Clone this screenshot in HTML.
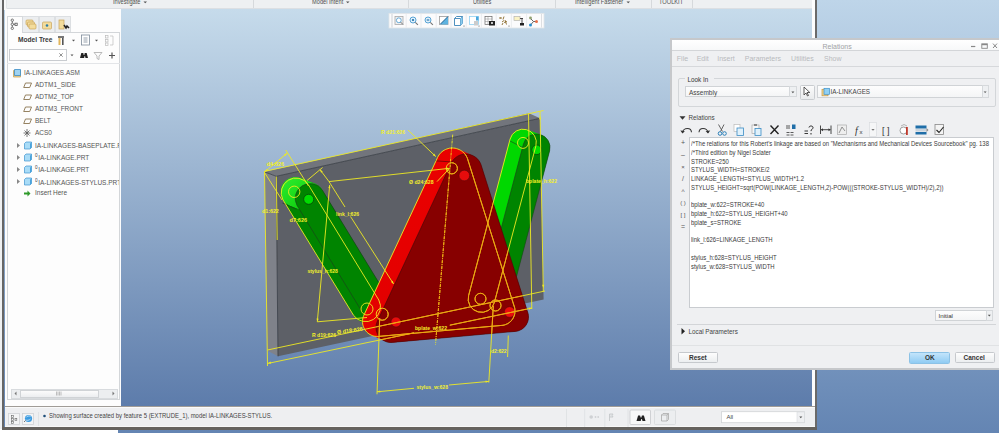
<!DOCTYPE html>
<html><head><meta charset="utf-8">
<style>
*{margin:0;padding:0;box-sizing:border-box}
html,body{width:999px;height:433px;overflow:hidden}
body{position:relative;font-family:"Liberation Sans",sans-serif;background:linear-gradient(#bed5e9 0px,#6485b3 433px);}
.a{position:absolute}
.t{position:absolute;white-space:nowrap;color:#333;line-height:1}
</style></head><body>
<!-- back window strip left -->
<div class="a" style="left:0;top:0;width:2.5px;height:433px;background:#eef0f2"></div>
<div class="a" style="left:0;top:429px;width:118px;height:4px;background:#fff"></div>
<!-- creo window -->
<div class="a" style="left:2.3px;top:0;width:2px;height:429px;background:#666"></div>
<div class="a" style="left:815px;top:0;width:2px;height:429px;background:#6a6a6a"></div>
<div class="a" style="left:2.3px;top:427px;width:814.7px;height:2.5px;background:#65625e"></div>
<div class="a" style="left:812px;top:0;width:3px;height:408px;background:#fdfdfd"></div>
<!-- ribbon -->
<div class="a" style="left:4.3px;top:0;width:808px;height:9.5px;background:#f8f9fa"></div>
<div class="a" style="left:6.3px;top:0;width:806px;height:9px;background:#eef0f2;border-bottom:1.5px solid #dcdfe3;border-left:1px solid #e2e5e8;border-bottom-left-radius:1.5px"></div>
<div class="a" style="left:253px;top:0;width:1px;height:8px;background:#d6d9dc"></div>
<div class="a" style="left:408px;top:0;width:1px;height:8px;background:#d6d9dc"></div>
<div class="a" style="left:555px;top:0;width:1px;height:8px;background:#d6d9dc"></div>
<div class="a" style="left:651px;top:0;width:1px;height:8px;background:#d6d9dc"></div>
<div class="a" style="left:692px;top:0;width:1px;height:8px;background:#d6d9dc"></div>
<div class="t" style="left:112.5px;top:-0.85px;font-size:6.6px;color:#505050;transform:scaleX(0.86);transform-origin:0 0">Investigate</div>
<div class="t" style="left:312px;top:-0.85px;font-size:6.6px;color:#505050;transform:scaleX(0.86);transform-origin:0 0">Model Intent</div>
<div class="t" style="left:473px;top:-0.85px;font-size:6.6px;color:#505050;transform:scaleX(0.86);transform-origin:0 0">Utilities</div>
<div class="t" style="left:575px;top:-0.85px;font-size:6.6px;color:#505050;transform:scaleX(0.86);transform-origin:0 0">Intelligent Fastener</div>
<div class="t" style="left:659px;top:-0.85px;font-size:6.6px;color:#505050;transform:scaleX(0.86);transform-origin:0 0">TOOLKIT</div>
<svg class="a" style="left:0;top:0" width="700" height="8">
 <path d="M143.5 1.5h3.5l-1.75 1.8z M346 1.5h3.5l-1.75 1.8z M626.5 1.5h3.5l-1.75 1.8z" fill="#555"/>
</svg>
<!-- left panel -->
<div class="a" style="left:5px;top:9px;width:116px;height:397px;background:#fdfdfd"></div>
<!-- tabs -->
<div class="a" style="left:22px;top:16px;width:17px;height:16px;background:#eceef0;border:1px solid #dcdfe2;border-bottom:none"></div>
<div class="a" style="left:39px;top:16px;width:16px;height:16px;background:#eceef0;border:1px solid #dcdfe2;border-bottom:none"></div>
<div class="a" style="left:55px;top:16px;width:16px;height:16px;background:#eceef0;border:1px solid #dcdfe2;border-bottom:none"></div>
<div class="a" style="left:7px;top:16px;width:16px;height:17px;background:#fdfdfd;border:1px solid #d6d9dc;border-bottom:none"></div>
<!-- panel box -->
<div class="a" style="left:7px;top:32px;width:113px;height:368px;border:1px solid #d3d6d9;border-top:none"></div>
<div class="a" style="left:22px;top:32px;width:98px;height:1px;background:#d3d6d9"></div>
<div class="a" style="left:7px;top:63px;width:113px;height:1px;background:#e3e5e8"></div>
<!-- tab icons -->
<svg class="a" style="left:0;top:0" width="125" height="70">
 <g fill="none" stroke="#555" stroke-width="0.8">
  <circle cx="12.3" cy="20.2" r="1.2"/><circle cx="12.3" cy="24.3" r="1.2"/><circle cx="12.3" cy="28.3" r="1.2"/><rect x="15" y="23.2" width="2.2" height="2.2"/>
  <path d="M12.3 21.4v1.7M12.3 25.5v1.6M13.5 24.3h1.5"/>
 </g>
 <g fill="#f3dc9c" stroke="#c8a35a" stroke-width="0.7">
  <rect x="26" y="20" width="7" height="5" rx="1"/><rect x="27.5" y="22" width="7" height="5" rx="1"/><rect x="29" y="24" width="7" height="5" rx="1"/>
  <rect x="42.5" y="22" width="9" height="7" rx="1"/>
  <rect x="59" y="20" width="5" height="9"/>
 </g>
 <circle cx="47" cy="25.5" r="1.3" fill="#2d7ea8"/>
 <path d="M64 25l2 3 1-2 2 2" stroke="#222" stroke-width="1.6" fill="none"/>
 <!-- header icons -->
 <rect x="58" y="36" width="6" height="2" fill="#777"/>
 <rect x="58.5" y="38" width="2" height="7" fill="#e2b65c"/>
 <rect x="62" y="38" width="1.6" height="7" fill="#555"/>
 <path d="M72 39.8h3l-1.5 1.8z" fill="#555"/>
 <rect x="81.5" y="35" width="8" height="10" fill="#fff" stroke="#7d8a99" stroke-width="0.8"/>
 <path d="M83.5 38h4M83.5 40h4M83.5 42h4" stroke="#6a7a8a" stroke-width="0.7"/>
 <path d="M95 39.8h3l-1.5 1.8z" fill="#555"/>
 <g fill="none" stroke="#bbb" stroke-width="0.7"><rect x="105.5" y="35.5" width="2.5" height="2.5"/><rect x="105.5" y="39.5" width="2.5" height="2.5"/><rect x="105.5" y="43" width="2.5" height="2.5"/><path d="M110 36h3v9h-3"/></g>
 <!-- search -->
 <rect x="9.5" y="49.5" width="57" height="11" fill="#fff" stroke="#c9ccd0" stroke-width="1"/>
 <path d="M59.3 53.3l3.4 3.4M62.7 53.3l-3.4 3.4" stroke="#777" stroke-width="0.8"/>
 <path d="M70.5 54.5h3l-1.5 1.8z" fill="#555"/>
 <path d="M80 58l1.3-5h2l.4 2h.6l.4-2h2l1.3 5h-2.5l-.5-2h-.4l-.5 2z" fill="#222"/>
 <path d="M94 52.5h8l-3 3.5v3.5l-2-1v-2.5z" fill="none" stroke="#aaa" stroke-width="0.8"/>
 <path d="M112 52.5v6M109 55.5h6" stroke="#555" stroke-width="1.2"/>
</svg>
<div class="t" style="left:18px;top:37.2px;font-size:6.6px;font-weight:bold;color:#3a3a3a">Model Tree</div>
<!-- tree items -->
<svg class="a" style="left:0;top:60px" width="125" height="145">
 <path d="M13.5 10.5h7v6.5h-7z" fill="#f1d592" stroke="#caa55a" stroke-width="0.8"/>
 <path d="M14.5 9.5h6v6h-6z" fill="#9fd3f2" stroke="#3a8cc5" stroke-width="0.8"/>
 <g fill="none" stroke="#8a7550" stroke-width="0.9">
  <path d="M25.5 23h6l-1.8 4.5h-6z"/><path d="M25.5 35h6l-1.8 4.5h-6z"/><path d="M25.5 47h6l-1.8 4.5h-6z"/><path d="M25.5 59h6l-1.8 4.5h-6z"/>
 </g>
 <g stroke="#555" stroke-width="0.8"><path d="M27 69v8M23.5 73h7M24.5 70.5l5 5M29.5 70.5l-5 5"/></g>
 <g fill="#888"><path d="M17 83l3 2.5-3 2.5z"/><path d="M17 95l3 2.5-3 2.5z"/><path d="M17 107l3 2.5-3 2.5z"/><path d="M17 119l3 2.5-3 2.5z"/></g>
 <path d="M24.5 83.5l1.5-1.5h5.5v5.5l-1.5 1.5h-5.5z" fill="#a9dcf7" stroke="#3d94cf" stroke-width="0.7"/><path d="M30 83.5l1.5-1.5v5.5l-1.5 1.5z" fill="#4aa3dc"/><path d="M24.5 95.5l1.5-1.5h5.5v5.5l-1.5 1.5h-5.5z" fill="#a9dcf7" stroke="#3d94cf" stroke-width="0.7"/><path d="M30 95.5l1.5-1.5v5.5l-1.5 1.5z" fill="#4aa3dc"/><path d="M24.5 107.5l1.5-1.5h5.5v5.5l-1.5 1.5h-5.5z" fill="#a9dcf7" stroke="#3d94cf" stroke-width="0.7"/><path d="M30 107.5l1.5-1.5v5.5l-1.5 1.5z" fill="#4aa3dc"/><path d="M24.5 119.5l1.5-1.5h5.5v5.5l-1.5 1.5h-5.5z" fill="#a9dcf7" stroke="#3d94cf" stroke-width="0.7"/><path d="M30 119.5l1.5-1.5v5.5l-1.5 1.5z" fill="#4aa3dc"/>
 <path d="M24 132.5h3.5v-2l3 3-3 3v-2h-3.5z" fill="#2e9a2a"/>
</svg>
<div class="t" style="left:24px;top:70px;font-size:6.4px;color:#555">IA-LINKAGES.ASM</div>
<div class="t" style="left:35px;top:81.5px;font-size:6.5px;color:#555">ADTM1_SIDE</div>
<div class="t" style="left:35px;top:93.5px;font-size:6.5px;color:#555">ADTM2_TOP</div>
<div class="t" style="left:35px;top:105.5px;font-size:6.5px;color:#555">ADTM3_FRONT</div>
<div class="t" style="left:35px;top:117.5px;font-size:6.5px;color:#555">BELT</div>
<div class="t" style="left:35px;top:129.5px;font-size:6.5px;color:#555">ACS0</div>
<div class="a" style="left:35px;top:141px;width:84px;height:10px;overflow:hidden"><div class="t" style="left:0;top:1.5px;font-size:6.5px;color:#555">IA-LINKAGES-BASEPLATE.PRT</div></div>
<div class="t" style="left:35px;top:153.5px;font-size:6.5px;color:#555"><span style="font-size:4.6px;vertical-align:2.5px;margin-right:0.6px;color:#444">0</span>IA-LINKAGE.PRT</div>
<div class="t" style="left:35px;top:165.5px;font-size:6.5px;color:#555"><span style="font-size:4.6px;vertical-align:2.5px;margin-right:0.6px;color:#444">0</span>IA-LINKAGE.PRT</div>
<div class="a" style="left:35px;top:177px;width:84px;height:10px;overflow:hidden"><div class="t" style="left:0;top:1.5px;font-size:6.5px;color:#555"><span style="font-size:4.6px;vertical-align:2.5px;margin-right:0.6px;color:#444">0</span>IA-LINKAGES-STYLUS.PRT</div></div>
<div class="t" style="left:35px;top:189.5px;font-size:6.5px;color:#555">Insert Here</div>
<!-- scrollbar -->
<div class="a" style="left:11px;top:389px;width:107px;height:10px;background:#eceef0;border:1px solid #d8dbde"></div>
<div class="a" style="left:20px;top:390px;width:79px;height:8px;background:linear-gradient(#fbfbfb,#eceef0);border:1px solid #d0d3d6"></div>
<svg class="a" style="left:0;top:385px" width="125" height="20">
 <path d="M16.5 6.5l-2 2 2 2z" fill="#777"/><path d="M112.5 6.5l2 2-2 2z" fill="#777"/>
 <path d="M56.5 6.5v4M58 6.5v4M59.5 6.5v4M61 6.5v4" stroke="#999" stroke-width="0.6"/>
</svg>
<!-- viewport -->
<div id="vp" class="a" style="left:121px;top:9px;width:691px;height:397px;background:linear-gradient(#c6dbeb 0px,#5d7cab 397px)"></div>
<!-- MODEL -->
<svg class="a" style="left:0;top:0" width="999" height="433"><defs>
<linearGradient id="gcap" x1="0" y1="0" x2="1" y2="1"><stop offset="0" stop-color="#30ee30"/><stop offset="1" stop-color="#00c000"/></linearGradient>
<linearGradient id="gred" x1="0" y1="0" x2="0" y2="1"><stop offset="0" stop-color="#ea0000"/><stop offset="1" stop-color="#e20000"/></linearGradient>
</defs><path d="M264.5 171.8L529 113.3L540 118.3L276.2 176.3Z" fill="#72757c"/>
<path d="M264.5 171.8L276.2 176.3L278 356.3L267.2 350.6Z" fill="#7f828a"/>
<path d="M276.2 176.3L540 118.3L543.6 299.4L278 356.3Z" fill="#5d6067"/>
<path d="M264.5 171.8L276.2 176.3L540 118.3M276.2 176.3L278 356.3" stroke="#34363b" stroke-width="0.7" fill="none"/>
<path d="M280.7 192.0L280.8 190.1L281.2 188.2L281.8 186.3L282.7 184.6L283.8 183.0L285.0 181.5L286.5 180.3L288.1 179.2L289.8 178.3L291.7 177.7L293.6 177.3L295.5 177.2L297.4 177.3L299.3 177.7L301.2 178.3L315.2 183.8L316.9 184.7L318.5 185.8L320.0 187.0L321.2 188.5L322.3 190.1L393.0 305.8L393.9 307.5L394.5 309.4L394.9 311.3L395.0 313.2L394.9 315.1L394.5 317.0L393.9 318.9L393.0 320.6L391.9 322.2L390.7 323.7L389.2 324.9L387.6 326.0L385.9 326.9L384.0 327.5L382.1 327.9L380.2 328.0L378.3 327.9L376.4 327.5L374.5 326.9L360.5 321.4L358.8 320.5L357.2 319.4L355.7 318.2L354.5 316.7L353.4 315.1L282.7 199.4L281.8 197.7L281.2 195.8L280.8 193.9Z" fill="#008400"/>
<clipPath id="cl1"><path d="M207.9 173.7L356.9 232.3L386.1 157.8L237.2 99.3Z"/></clipPath>
<path clip-path="url(#cl1)" d="M280.7 192.0L280.8 190.1L281.2 188.2L281.8 186.3L282.7 184.6L283.8 183.0L285.0 181.5L286.5 180.3L288.1 179.2L289.8 178.3L291.7 177.7L293.6 177.3L295.5 177.2L297.4 177.3L299.3 177.7L301.2 178.3L315.2 183.8L316.9 184.7L318.5 185.8L320.0 187.0L321.2 188.5L322.3 190.1L323.2 191.8L323.8 193.7L324.2 195.6L324.3 197.5L324.2 199.4L323.8 201.3L323.2 203.2L322.3 204.9L321.2 206.5L320.0 208.0L318.5 209.2L316.9 210.3L315.2 211.2L313.3 211.8L311.4 212.2L309.5 212.3L307.6 212.2L305.7 211.8L303.8 211.2L289.8 205.7L288.1 204.8L286.5 203.7L285.0 202.5L283.8 201.0L282.7 199.4L281.8 197.7L281.2 195.8L280.8 193.9Z" fill="url(#gcap)"/>
<path d="M282.4 203L296.5 209.2" stroke="#1d3a1d" stroke-width="0.6"/>
<path d="M296.9 205.2L367.6 320.9A14.8 14.8 0 0 0 392.8 305.5L322.1 189.8A14.8 14.8 0 0 0 296.9 205.2Z" fill="#008400" stroke="#1d3a1d" stroke-width="0.6"/>
<circle cx="308.7" cy="199.3" r="5" fill="#00dc00" stroke="#0a3a0a" stroke-width="0.7"/>
<path d="M468.0 300.0L468.1 298.2L468.5 296.5L510.0 139.0L510.5 137.3L511.3 135.8L512.3 134.3L513.5 133.0L514.8 131.8L516.2 130.8L517.8 130.0L519.5 129.5L521.2 129.1L523.0 129.0L524.8 129.1L526.5 129.5L528.2 130.0L541.7 135.0L543.2 135.8L544.7 136.8L546.0 138.0L547.2 139.3L548.2 140.8L549.0 142.3L549.5 144.0L549.9 145.7L550.0 147.5L549.9 149.3L549.5 151.0L508.0 308.5L507.5 310.2L506.7 311.8L505.7 313.2L504.5 314.5L503.2 315.7L501.8 316.7L500.2 317.5L498.5 318.0L496.8 318.4L495.0 318.5L493.2 318.4L491.5 318.0L489.8 317.5L476.3 312.5L474.8 311.7L473.3 310.7L472.0 309.5L470.8 308.2L469.8 306.8L469.0 305.2L468.5 303.5L468.1 301.8Z" fill="#00d800"/>
<path d="M523.4 144.1L481.9 301.6A13.5 13.5 0 0 0 508.1 308.4L549.6 150.9A13.5 13.5 0 0 0 523.4 144.1Z" fill="#008400" stroke="#1d3a1d" stroke-width="0.6"/>
<path d="M509.7 140.8L523 147.7" stroke="#1d3a1d" stroke-width="0.6"/>
<circle cx="536.7" cy="149.8" r="4.8" fill="#00dc00" stroke="#0a3a0a" stroke-width="0.7"/>
<path d="M362.5 321.5L362.6 320.2L362.7 318.9L363.0 317.6L363.4 316.4L363.9 315.2L437.6 157.4L438.3 156.1L439.0 154.9L439.9 153.8L440.8 152.7L441.9 151.8L443.0 150.9L444.2 150.2L445.5 149.5L446.8 149.0L448.1 148.6L449.5 148.2L450.9 148.1L452.3 148.0L453.7 148.1L455.1 148.2L456.5 148.6L457.8 149.0L459.1 149.5L472.6 155.5L473.9 156.2L475.1 156.9L476.2 157.8L477.3 158.7L478.2 159.8L479.1 160.9L479.8 162.1L480.5 163.4L481.0 164.7L527.6 312.0L528.0 313.2L528.3 314.5L528.4 315.7L528.5 317.0L528.4 318.3L528.3 319.5L528.0 320.8L527.6 322.0L527.1 323.1L526.6 324.2L525.9 325.3L525.1 326.3L524.3 327.3L523.3 328.1L522.3 328.9L521.2 329.6L520.1 330.1L519.0 330.6L517.8 331.0L516.5 331.3L515.3 331.4L392.3 342.4L391.0 342.5L389.7 342.4L388.4 342.3L387.1 342.0L385.9 341.6L384.7 341.1L371.2 335.1L370.0 334.5L368.9 333.8L367.9 333.0L366.9 332.1L366.0 331.1L365.2 330.1L364.5 329.0L363.9 327.8L363.4 326.6L363.0 325.4L362.7 324.1L362.6 322.8Z" fill="url(#gred)"/>
<path d="M376.0 327.5L376.1 326.2L376.2 324.9L376.5 323.6L376.9 322.4L377.4 321.2L451.1 163.4L451.8 162.1L452.5 160.9L453.4 159.8L454.3 158.7L455.4 157.8L456.5 156.9L457.7 156.2L459.0 155.5L460.3 155.0L461.6 154.6L463.0 154.2L464.4 154.1L465.8 154.0L467.2 154.1L468.6 154.2L470.0 154.6L471.3 155.0L472.6 155.5L473.9 156.2L475.1 156.9L476.2 157.8L477.3 158.7L478.2 159.8L479.1 160.9L479.8 162.1L480.5 163.4L481.0 164.7L527.6 312.0L528.0 313.2L528.3 314.5L528.4 315.7L528.5 317.0L528.4 318.3L528.3 319.5L528.0 320.8L527.6 322.0L527.1 323.1L526.6 324.2L525.9 325.3L525.1 326.3L524.3 327.3L523.3 328.1L522.3 328.9L521.2 329.6L520.1 330.1L519.0 330.6L517.8 331.0L516.5 331.3L515.3 331.4L392.3 342.4L391.0 342.5L389.7 342.4L388.4 342.3L387.1 342.0L385.9 341.6L384.7 341.1L383.5 340.5L382.4 339.8L381.4 339.0L380.4 338.1L379.5 337.1L378.7 336.1L378.0 335.0L377.4 333.8L376.9 332.6L376.5 331.4L376.2 330.1L376.1 328.8Z" fill="#870000" stroke="#3a0808" stroke-width="0.6"/>
<path d="M435 160.8L452.5 162" stroke="#3a0808" stroke-width="0.6"/>
<circle cx="464.3" cy="175.5" r="5.3" fill="#e80c0c" stroke="#4a0a0a" stroke-width="0.5"/>
<circle cx="396" cy="322" r="5" fill="#e80c0c" stroke="#4a0a0a" stroke-width="0.5"/>
<circle cx="509.6" cy="312" r="5.3" fill="#e80c0c" stroke="#4a0a0a" stroke-width="0.5"/>
<g fill="none" stroke="#eeea22" stroke-width="0.9"><path d="M264 171.5L543.5 110.5"/><path d="M267.5 350L545 291"/><path d="M267.5 363.5L414 332.8"/><path d="M449.8 325.2L532 308"/><path d="M264.5 171.5L267.5 366"/><path d="M276.3 176.5L277.2 240"/><path d="M528.5 113.5L531.8 309"/><path d="M540 111.5L543.3 291.5"/><path d="M264.5 172L287.3 153"/><path d="M264.5 172.5L282 200"/><path d="M285.7 150L308.5 186"/><path d="M322.6 167.5L307 180.5"/><path d="M320 169.6L329 181.6L345 207"/><path d="M350.5 216.5L393.6 284"/><path d="M329 181.6L449.6 168.3"/><path d="M329.7 185L317.3 321.8L367 317.5"/><path d="M452.7 134.6L435.5 344.6" stroke-dasharray="3 1 1 1"/><path d="M408 130L435.8 156.6"/><path d="M437 181.6L449.6 168.3"/><path d="M379.7 318L377 394.3"/><path d="M493.3 306L488.8 382.6"/><path d="M377 391.8L414 388.3"/><path d="M449 385L488.8 381.4"/><path d="M508.3 335.5L507.6 357"/><path d="M362.5 321.5L362.6 320.2L362.7 318.9L363.0 317.6L363.4 316.4L363.9 315.2L437.6 157.4L438.3 156.1L439.0 154.9L439.9 153.8L440.8 152.7L441.9 151.8L443.0 150.9L444.2 150.2L445.5 149.5L446.8 149.0L448.1 148.6L449.5 148.2L450.9 148.1L452.3 148.0L453.7 148.1L455.1 148.2L456.5 148.6L457.8 149.0L459.1 149.5L460.4 150.2L461.6 150.9L462.7 151.8L463.8 152.7L464.7 153.8L465.6 154.9L466.3 156.1L467.0 157.4L467.5 158.7L514.1 306.0L514.5 307.2L514.8 308.5L514.9 309.7L515.0 311.0L514.9 312.3L514.8 313.5L514.5 314.8L514.1 316.0L513.6 317.1L513.1 318.2L512.4 319.3L511.6 320.3L510.8 321.3L509.8 322.1L508.8 322.9L507.8 323.6L506.6 324.1L505.5 324.6L504.3 325.0L503.0 325.3L501.8 325.4L378.8 336.4L377.5 336.5L376.2 336.4L374.9 336.3L373.6 336.0L372.4 335.6L371.2 335.1L370.0 334.5L368.9 333.8L367.9 333.0L366.9 332.1L366.0 331.1L365.2 330.1L364.5 329.0L363.9 327.8L363.4 326.6L363.0 325.4L362.7 324.1L362.6 322.8Z"/><path d="M510.1 139.1L468.6 295.6A13.3 13.3 0 0 0 494.4 302.4L535.9 145.9A13.3 13.3 0 0 0 510.1 139.1Z"/><path d="M282.9 199.7L353.6 315.4A14.8 14.8 0 0 0 378.8 300.0L308.1 184.3A14.8 14.8 0 0 0 282.9 199.7Z"/><circle cx="294.2" cy="191.8" r="5.7"/><circle cx="523" cy="142.9" r="5.5"/><circle cx="451.8" cy="168.3" r="5.6"/><circle cx="367" cy="309" r="6"/><circle cx="382.2" cy="314.2" r="6"/><circle cx="480.5" cy="298.8" r="5.5"/><circle cx="495.5" cy="305.5" r="5.5"/></g><g fill="#eeea22"><path d="M435.8 156.6L432.7 155.2L434.2 153.6Z"/><path d="M264.8 171.8L266.6 168.9L268.0 170.6Z"/><path d="M287.3 153.0L285.5 155.9L284.1 154.2Z"/><path d="M393.6 284.0L391.0 281.9L392.8 280.7Z"/><path d="M320.0 169.6L322.8 171.5L321.0 172.8Z"/><path d="M449.6 168.3L446.5 169.7L446.3 167.6Z"/><path d="M317.3 321.8L316.5 318.5L318.7 318.7Z"/><path d="M329.7 185.0L330.5 188.3L328.3 188.1Z"/><path d="M267.7 363.3L270.6 361.6L271.1 363.7Z"/><path d="M532.0 308.0L529.1 309.7L528.6 307.6Z"/><path d="M377.0 391.8L380.1 390.4L380.3 392.6Z"/><path d="M488.8 381.4L485.7 382.8L485.5 380.6Z"/><path d="M543.3 288.0L542.1 284.8L544.3 284.8Z"/><path d="M540.0 116.0L541.2 119.2L539.0 119.2Z"/><path d="M449.6 168.3L448.2 171.4L446.6 169.9Z"/></g><clipPath id="clr"><path d="M376.0 327.5L376.1 326.2L376.2 324.9L376.5 323.6L376.9 322.4L377.4 321.2L451.1 163.4L451.8 162.1L452.5 160.9L453.4 159.8L454.3 158.7L455.4 157.8L456.5 156.9L457.7 156.2L459.0 155.5L460.3 155.0L461.6 154.6L463.0 154.2L464.4 154.1L465.8 154.0L467.2 154.1L468.6 154.2L470.0 154.6L471.3 155.0L472.6 155.5L473.9 156.2L475.1 156.9L476.2 157.8L477.3 158.7L478.2 159.8L479.1 160.9L479.8 162.1L480.5 163.4L481.0 164.7L527.6 312.0L528.0 313.2L528.3 314.5L528.4 315.7L528.5 317.0L528.4 318.3L528.3 319.5L528.0 320.8L527.6 322.0L527.1 323.1L526.6 324.2L525.9 325.3L525.1 326.3L524.3 327.3L523.3 328.1L522.3 328.9L521.2 329.6L520.1 330.1L519.0 330.6L517.8 331.0L516.5 331.3L515.3 331.4L392.3 342.4L391.0 342.5L389.7 342.4L388.4 342.3L387.1 342.0L385.9 341.6L384.7 341.1L383.5 340.5L382.4 339.8L381.4 339.0L380.4 338.1L379.5 337.1L378.7 336.1L378.0 335.0L377.4 333.8L376.9 332.6L376.5 331.4L376.2 330.1L376.1 328.8Z"/></clipPath><g clip-path="url(#clr)" fill="none" stroke="#f0a010" stroke-width="0.9"><path d="M264 171.5L543.5 110.5"/><path d="M267.5 350L545 291"/><path d="M267.5 363.5L414 332.8"/><path d="M449.8 325.2L532 308"/><path d="M264.5 171.5L267.5 366"/><path d="M276.3 176.5L277.2 240"/><path d="M528.5 113.5L531.8 309"/><path d="M540 111.5L543.3 291.5"/><path d="M264.5 172L287.3 153"/><path d="M264.5 172.5L282 200"/><path d="M285.7 150L308.5 186"/><path d="M322.6 167.5L307 180.5"/><path d="M320 169.6L329 181.6L345 207"/><path d="M350.5 216.5L393.6 284"/><path d="M329 181.6L449.6 168.3"/><path d="M329.7 185L317.3 321.8L367 317.5"/><path d="M452.7 134.6L435.5 344.6" stroke-dasharray="3 1 1 1"/><path d="M408 130L435.8 156.6"/><path d="M437 181.6L449.6 168.3"/><path d="M379.7 318L377 394.3"/><path d="M493.3 306L488.8 382.6"/><path d="M377 391.8L414 388.3"/><path d="M449 385L488.8 381.4"/><path d="M508.3 335.5L507.6 357"/><path d="M362.5 321.5L362.6 320.2L362.7 318.9L363.0 317.6L363.4 316.4L363.9 315.2L437.6 157.4L438.3 156.1L439.0 154.9L439.9 153.8L440.8 152.7L441.9 151.8L443.0 150.9L444.2 150.2L445.5 149.5L446.8 149.0L448.1 148.6L449.5 148.2L450.9 148.1L452.3 148.0L453.7 148.1L455.1 148.2L456.5 148.6L457.8 149.0L459.1 149.5L460.4 150.2L461.6 150.9L462.7 151.8L463.8 152.7L464.7 153.8L465.6 154.9L466.3 156.1L467.0 157.4L467.5 158.7L514.1 306.0L514.5 307.2L514.8 308.5L514.9 309.7L515.0 311.0L514.9 312.3L514.8 313.5L514.5 314.8L514.1 316.0L513.6 317.1L513.1 318.2L512.4 319.3L511.6 320.3L510.8 321.3L509.8 322.1L508.8 322.9L507.8 323.6L506.6 324.1L505.5 324.6L504.3 325.0L503.0 325.3L501.8 325.4L378.8 336.4L377.5 336.5L376.2 336.4L374.9 336.3L373.6 336.0L372.4 335.6L371.2 335.1L370.0 334.5L368.9 333.8L367.9 333.0L366.9 332.1L366.0 331.1L365.2 330.1L364.5 329.0L363.9 327.8L363.4 326.6L363.0 325.4L362.7 324.1L362.6 322.8Z"/><path d="M510.1 139.1L468.6 295.6A13.3 13.3 0 0 0 494.4 302.4L535.9 145.9A13.3 13.3 0 0 0 510.1 139.1Z"/><path d="M282.9 199.7L353.6 315.4A14.8 14.8 0 0 0 378.8 300.0L308.1 184.3A14.8 14.8 0 0 0 282.9 199.7Z"/><circle cx="294.2" cy="191.8" r="5.7"/><circle cx="523" cy="142.9" r="5.5"/><circle cx="451.8" cy="168.3" r="5.6"/><circle cx="367" cy="309" r="6"/><circle cx="382.2" cy="314.2" r="6"/><circle cx="480.5" cy="298.8" r="5.5"/><circle cx="495.5" cy="305.5" r="5.5"/></g>
<g font-family="Liberation Sans" font-size="5.6" font-weight="bold" fill="#f4f02a"><text x="266.5" y="165.5" textLength="17.5" lengthAdjust="spacingAndGlyphs">d4:626</text><text x="381" y="133.5" textLength="24" lengthAdjust="spacingAndGlyphs">R d21:626</text><text x="409" y="184.3" textLength="24.5" lengthAdjust="spacingAndGlyphs">Ø d24:628</text><text x="336" y="215.8" textLength="23" lengthAdjust="spacingAndGlyphs">link_l:626</text><text x="262" y="213.0" textLength="16.80000000000001" lengthAdjust="spacingAndGlyphs">d1:622</text><text x="289.6" y="222.0" textLength="17.399999999999977" lengthAdjust="spacingAndGlyphs">d7:626</text><text x="307.4" y="272.5" textLength="30.400000000000034" lengthAdjust="spacingAndGlyphs">stylus_h:628</text><text x="312" y="336.8" textLength="24" lengthAdjust="spacingAndGlyphs">R d19:626</text><text x="337" y="334.3" textLength="26" lengthAdjust="spacingAndGlyphs" transform="rotate(-8 337 332.3)">Ø d18:626</text><text x="415" y="330.0" textLength="32" lengthAdjust="spacingAndGlyphs">bplate_w:622</text><text x="526" y="183.0" textLength="31" lengthAdjust="spacingAndGlyphs">bplate_h:622</text><text x="491" y="353.0" textLength="15.600000000000023" lengthAdjust="spacingAndGlyphs">d2:622</text><text x="416.5" y="388.5" textLength="31.5" lengthAdjust="spacingAndGlyphs">stylus_w:628</text></g>
</svg>
<!-- /MODEL -->
<!-- graphics toolbar -->
<svg class="a" style="left:388px;top:12px" width="158" height="18">
 <rect x="1" y="1.5" width="155" height="14.5" fill="#fbfbfc" stroke="#e2e5e8" stroke-width="0.8"/>
 <path d="M3.5 2v13.5M4.5 2v13.5" stroke="#d5d8db" stroke-width="0.6"/>
 <g stroke="#e6e8eb" stroke-width="0.8"><path d="M18.2 2v13.5M33 2v13.5M48.2 2v13.5M63 2v13.5M78.2 2v13.5M93.4 2v13.5M108.2 2v13.5M123.4 2v13.5M138.6 2v13.5"/></g>
 <path d="M153.5 2v13.5" stroke="#d5d8db" stroke-width="0.8"/>
 <!-- 1 refit -->
 <rect x="7" y="4.5" width="8" height="8" fill="#eef0f2" stroke="#a8a8a8" stroke-width="0.8"/>
 <circle cx="10.8" cy="8.3" r="2.4" fill="#fff" stroke="#4a9bd0" stroke-width="0.8"/><path d="M12.5 10l2.5 2.5" stroke="#777" stroke-width="1"/>
 <!-- 2 zoom in -->
 <circle cx="25" cy="8" r="3" fill="#dff0fb" stroke="#4a9bd0" stroke-width="0.9"/><circle cx="25" cy="8" r="1.1" fill="#1e6fa8"/><path d="M27.3 10.3l2.6 2.6" stroke="#777" stroke-width="1.1"/>
 <!-- 3 zoom out -->
 <circle cx="40" cy="8" r="3" fill="#dff0fb" stroke="#4a9bd0" stroke-width="0.9"/><path d="M38.7 8h2.6" stroke="#1e6fa8" stroke-width="1.1"/><path d="M42.3 10.3l2.6 2.6" stroke="#777" stroke-width="1.1"/>
 <!-- 4 repaint -->
 <rect x="51.5" y="4.5" width="8.5" height="8" fill="#fff" stroke="#999" stroke-width="0.8"/><path d="M52 12.5l8-8v8z" fill="#5eb3e0"/><path d="M52.5 12l7.5-7.5" stroke="#1d5f93" stroke-width="1"/>
 <!-- 5 cube -->
 <path d="M66.5 6.5l2-2h6v7l-2 2h-6z" fill="#fff" stroke="#3c84b8" stroke-width="0.9"/><path d="M66.5 6.5h6v7M72.5 6.5l2-2" fill="none" stroke="#3c84b8" stroke-width="0.9"/><path d="M72.5 6.5l2-2v7l-2 2z" fill="#8ccbed"/><circle cx="76" cy="14" r="0.5" fill="#333"/>
 <!-- 6 view manager -->
 <rect x="81.5" y="4.5" width="9" height="8" fill="#fff" stroke="#8fd0f2" stroke-width="0.8"/><rect x="88" y="4.5" width="2.5" height="4" fill="#4aa6db"/><rect x="86" y="9" width="4" height="4.5" fill="#ccc"/><circle cx="91" cy="14" r="0.5" fill="#333"/>
 <!-- 7 display style -->
 <rect x="97" y="4.5" width="7" height="8" fill="#fff" stroke="#666" stroke-width="0.7"/><path d="M97 7h7M97 9.5h7M100 4.5v8" stroke="#888" stroke-width="0.5"/><rect x="101" y="9" width="6" height="4.5" fill="#222"/><circle cx="104" cy="11" r="1" fill="#fff"/>
 <!-- 8 datum display -->
 <g stroke="#8a6a2a" stroke-width="0.9"><path d="M111.5 5l2 2M113.5 5l-2 2M116 4.5l-1 3M114 10l2-1.5M117 8l1.5 4.5M116 10.5l3-1M114 13l1-2"/></g><circle cx="121" cy="14" r="0.5" fill="#333"/>
 <!-- 9 annotation -->
 <rect x="126" y="4.5" width="6" height="4" fill="#fbf3c5" stroke="#aaa" stroke-width="0.6"/><path d="M132 6.5h3M134 6.5v5" stroke="#222" stroke-width="0.8"/><rect x="132" y="11" width="4" height="2.5" fill="#222"/>
 <!-- 10 spin center -->
 <path d="M142.5 6.5l3 3-3 3.5M145.5 9.5h3" stroke="#555" stroke-width="0.9" fill="none"/><circle cx="142.5" cy="6" r="1.4" fill="#8fa070"/><circle cx="142.5" cy="13" r="1.5" fill="#2a8fd0"/><circle cx="148.5" cy="9.5" r="1.5" fill="#e7704a"/>
</svg>
<!-- status bar -->
<div class="a" style="left:5px;top:406px;width:810px;height:21px;background:#eeeff1;border-top:1px solid #a09c97;box-shadow:inset 0 1px 0 #fafafa,inset 0 -1px 0 #f8f8f8"></div>
<svg class="a" style="left:0;top:406px" width="815" height="22">
 <rect x="8.5" y="7.5" width="11" height="11" fill="#f3f4f5" stroke="#cfd2d5" stroke-width="0.8"/>
 <g fill="none" stroke="#666" stroke-width="0.6"><rect x="11.5" y="9.5" width="1.8" height="1.8"/><rect x="11.5" y="12.5" width="1.8" height="1.8"/><rect x="11.5" y="15.5" width="1.8" height="1.8"/><rect x="15" y="12.5" width="1.8" height="1.8"/></g>
 <rect x="22.5" y="7.5" width="11" height="11" fill="#f3f4f5" stroke="#cfd2d5" stroke-width="0.8"/>
 <circle cx="28.5" cy="12.5" r="3.6" fill="#3b9be0"/><path d="M26 11.5c1-1.5 3-2 4.5-1M25.5 14c1.5.5 3.5.5 5-1" stroke="#cfe8fa" stroke-width="0.8" fill="none"/><path d="M24 16l1.5-1.5" stroke="#555" stroke-width="0.8"/>
 <path d="M38.5 6v14" stroke="#dcdfe2" stroke-width="0.8"/>
 <circle cx="44.5" cy="10" r="1.3" fill="#1f4e79"/>
 <g stroke="#dcdfe2" stroke-width="0.8"><path d="M566.5 3v18M584.7 3v18M604.8 3v18M628 3v18"/></g>
 <circle cx="591.2" cy="11" r="1.8" fill="#cfd1d4"/><circle cx="595.5" cy="11" r="0.9" fill="#cfd1d4"/><circle cx="598.2" cy="11" r="0.9" fill="#cfd1d4"/>
 <path d="M609.5 8v7M609.5 8h3.5l-.8 1.5.8 1.5h-3.5" stroke="#c5c8cb" stroke-width="0.9" fill="#e3e5e7"/>
 <rect x="630" y="4" width="20.5" height="14.5" rx="1" fill="#f7f8f8" stroke="#c5c8cc" stroke-width="0.8"/>
 <path d="M636.5 15l1.6-5.5h2l.5 2h.8l.5-2h2l1.6 5.5h-3l-.6-2h-.6l-.6 2z" fill="#222"/>
 <rect x="654.5" y="4" width="21" height="14.5" rx="1" fill="#eceef0" stroke="#d6d9dc" stroke-width="0.8"/>
 <path d="M661.5 9l1.5-1.5h5.5v6l-1.5 1.5h-5.5z M661.5 9h5.5v6M667 9l1.5-1.5" fill="none" stroke="#aaa" stroke-width="0.8"/>
 <rect x="721.5" y="5.7" width="83" height="11" fill="#fff" stroke="#d0d3d6" stroke-width="0.8"/>
 <rect x="797" y="6" width="7.5" height="10.5" fill="#eff0f2" stroke="#d6d9dc" stroke-width="0.6"/>
 <path d="M799.3 10.5h3l-1.5 1.7z" fill="#555"/>
</svg>
<div class="t" style="left:48.8px;top:413.2px;font-size:6.5px;color:#444;transform:scaleX(0.91);transform-origin:0 0">Showing surface created by feature 5 (EXTRUDE_1), model IA-LINKAGES-STYLUS.</div>
<div class="t" style="left:726.5px;top:413.5px;font-size:6px;color:#444">All</div>
<!-- dialog -->
<div id="dlg" class="a" style="left:670px;top:38px;width:333px;height:332px;background:#eff0f2;border:2px solid #c6c8cb"></div>
<div class="a" style="left:672px;top:40px;width:331px;height:11px;background:linear-gradient(#fff,#f7f8f9);border-bottom:1.5px solid #d3d5d8"></div>
<div class="t" style="left:822.5px;top:42.8px;font-size:7px;color:#a0a2a5">Relations</div>
<svg class="a" style="left:960px;top:40px" width="40" height="12">
 <path d="M11 6.5h4.3" stroke="#888" stroke-width="1.2"/>
 <rect x="21.8" y="3.8" width="5.5" height="4.5" fill="none" stroke="#888" stroke-width="0.9"/><path d="M21.8 4.6h5.5" stroke="#888" stroke-width="1.2"/>
 <path d="M33 3.6l4 4.4M37 3.6l-4 4.4" stroke="#888" stroke-width="1"/>
</svg>
<div class="a" style="left:672px;top:65.5px;width:331px;height:1px;background:#d6d8db"></div>
<div class="t" style="left:676.8px;top:55.3px;font-size:7px;color:#b8babd">File</div>
<div class="t" style="left:696.7px;top:55.3px;font-size:7px;color:#b8babd">Edit</div>
<div class="t" style="left:717.2px;top:55.3px;font-size:7px;color:#b8babd">Insert</div>
<div class="t" style="left:744.8px;top:55.3px;font-size:7px;color:#b8babd">Parameters</div>
<div class="t" style="left:791.1px;top:55.3px;font-size:7px;color:#b8babd">Utilities</div>
<div class="t" style="left:824px;top:55.3px;font-size:7px;color:#b8babd">Show</div>
<!-- look in group -->
<div class="a" style="left:678px;top:78px;width:318px;height:29px;border:1px solid #d3d6d9;border-radius:2px"></div>
<div class="a" style="left:685px;top:75px;width:29px;height:7px;background:#eff0f2"></div>
<div class="t" style="left:687.5px;top:76.6px;font-size:6.3px;color:#333">Look In</div>
<div class="a" style="left:685px;top:86.3px;width:112px;height:11.2px;background:linear-gradient(#fdfdfd,#f4f5f6);border:1px solid #d0d3d6"></div>
<div class="a" style="left:789px;top:86.3px;width:8px;height:11.2px;background:#eef0f2;border:1px solid #d6d9dc"></div>
<div class="t" style="left:689px;top:89.5px;font-size:6.5px;color:#444">Assembly</div>
<div class="a" style="left:799.5px;top:85px;width:15px;height:15px;background:linear-gradient(#fbfbfb,#e9ebed);border:1px solid #c9ccd0;border-radius:1.5px"></div>
<div class="a" style="left:816.8px;top:85.4px;width:172px;height:13px;background:linear-gradient(#fdfdfd,#f4f5f6);border:1px solid #d0d3d6"></div>
<div class="a" style="left:981.5px;top:85.4px;width:7.3px;height:13px;background:#eef0f2;border:1px solid #d6d9dc"></div>
<div class="t" style="left:830.5px;top:89.3px;font-size:6.3px;color:#444">IA-LINKAGES</div>
<svg class="a" style="left:670px;top:80px" width="330" height="30">
 <path d="M121.4 11.5h3l-1.5 1.7z M313.6 11.4h3l-1.5 1.7z" fill="#555"/>
 <path d="M134 7l0 8 2-2 1.5 3 1-.5-1.5-3h2.8z" fill="#fff" stroke="#333" stroke-width="0.8"/>
 <rect x="152" y="9.3" width="6" height="6.5" fill="#f4d38a" stroke="#c79a45" stroke-width="0.7"/>
 <rect x="154" y="8.3" width="5.5" height="6" fill="#8fd0f5" stroke="#3d8fc7" stroke-width="0.7"/>
</svg>
<!-- relations section -->
<svg class="a" style="left:670px;top:110px" width="330" height="35">
 <path d="M9.5 6.3h6l-3 3.5z" fill="#333"/>
 <!-- undo/redo -->
 <path d="M12.5 23c0-3 2.5-4.5 5-4.5 2 0 3.8 1.3 4 3.8" fill="none" stroke="#333" stroke-width="1.1"/><path d="M10.3 20.5l2.2 3 2.4-2.6z" fill="#333"/>
 <path d="M38 23c0-3-2.5-4.5-5-4.5-2 0-3.8 1.3-4 3.8" fill="none" stroke="#333" stroke-width="1.1"/><path d="M40.2 20.5l-2.2 3-2.4-2.6z" fill="#333"/>
 <!-- cut -->
 <path d="M48.5 14.5l4 7M54 14.5l-3.5 7" stroke="#555" stroke-width="0.9"/><circle cx="50" cy="23.5" r="1.8" fill="none" stroke="#2a7fb8" stroke-width="1"/><circle cx="54.5" cy="23.5" r="1.8" fill="none" stroke="#2a7fb8" stroke-width="1"/>
 <!-- copy -->
 <rect x="64" y="14.5" width="6" height="7" fill="#fff" stroke="#bbb" stroke-width="0.7"/><rect x="67" y="18" width="6.5" height="7.5" fill="#e0f1fb" stroke="#3a8cc5" stroke-width="0.8"/>
 <!-- paste -->
 <rect x="82" y="15" width="7" height="8.5" fill="#f7f7f7" stroke="#aaa" stroke-width="0.7"/><rect x="84" y="14" width="3" height="2" fill="#888"/><rect x="85" y="18.5" width="6" height="7" fill="#e0f1fb" stroke="#3a8cc5" stroke-width="0.8"/>
 <!-- delete X -->
 <path d="M100.5 15.5l8 8.5M108.5 15.5l-8 8.5" stroke="#222" stroke-width="1.4"/>
 <!-- sort -->
 <path d="M117 15v4M119 15v4" stroke="#333" stroke-width="0.8"/><rect x="122" y="14.5" width="3.5" height="4.5" fill="#1f6ea8"/><path d="M116.5 22.5h3M116.5 25h3M120.5 22.5h3M120.5 25h3" stroke="#333" stroke-width="0.8"/>
 <!-- =? -->
 <path d="M134.5 21h3.5M134.5 23.5h3.5" stroke="#222" stroke-width="0.9"/><path d="M139 17.5c0-2 4-2 4 0 0 1.8-2 1.6-2 3.6M141 23v1.5" stroke="#222" stroke-width="1" fill="none"/>
 <!-- |-| -->
 <path d="M150.5 15.5v8.5M161 15.5v8.5M151 19.7h9.5" stroke="#333" stroke-width="0.9"/><path d="M151 19.7l2-1.5v3z M160.5 19.7l-2-1.5v3z" fill="#333"/>
 <!-- eval -->
 <rect x="167.5" y="15" width="9" height="9.5" fill="#eee" stroke="#aaa" stroke-width="0.7"/><path d="M169 23l3-6 3 4" stroke="#777" stroke-width="0.8" fill="none"/>
 <!-- fx -->
 <text x="185" y="24" font-family="Liberation Serif" font-style="italic" font-size="10" fill="#333">f</text><text x="189.5" y="24" font-family="Liberation Sans" font-size="6" fill="#333">x</text>
 <rect x="199.5" y="12.5" width="7" height="14" fill="#f5f6f7" stroke="#d6d9dc" stroke-width="0.6"/><path d="M201.3 19h3.4l-1.7 1.8z" fill="#777"/>
 <!-- { } -->
 <text x="212" y="24" font-family="Liberation Sans" font-size="9" fill="#333">[ ]</text>
 <!-- 904 icon -->
 <circle cx="233.5" cy="20.5" r="3.5" fill="#fff" stroke="#888" stroke-width="0.8"/><rect x="236" y="17" width="1.8" height="8" fill="#c0392b"/><path d="M231 16l3-1.5 3 1.5" stroke="#999" stroke-width="0.7" fill="none"/>
 <!-- 921 icon -->
 <rect x="245.5" y="15.5" width="11" height="3" fill="#1f6ea8"/><rect x="245.5" y="19" width="11" height="2.5" fill="#c9d4de"/><rect x="245.5" y="22" width="11" height="2.5" fill="#1f6ea8"/><path d="M256.5 18l2 2-2 2" fill="#888"/>
 <!-- check -->
 <rect x="265" y="14.5" width="8.5" height="10" fill="#f4f4f4" stroke="#888" stroke-width="0.8"/><path d="M266.5 20l2.5 2.5 4.5-5.5" stroke="#222" stroke-width="1.1" fill="none"/>
</svg>
<div class="t" style="left:688.5px;top:114.8px;font-size:6.3px;color:#444">Relations</div>
<!-- text area -->
<div class="a" style="left:688.5px;top:136.8px;width:305.5px;height:171.7px;background:#fff;border:1px solid #c9ccd0"></div>
<svg class="a" style="left:670px;top:135px" width="20" height="100">
 <g font-family="Liberation Sans" font-size="7" fill="#555" text-anchor="middle">
  <text x="13" y="10">+</text><text x="13" y="21.5">&#8211;</text><text x="13" y="33.5" font-size="6">&#215;</text><text x="13" y="45.5">/</text><text x="13" y="58.5" font-size="6.5">^</text>
  <text x="13" y="69.5" font-size="6">( )</text><text x="13" y="81.5" font-size="6.2">[ ]</text><text x="13" y="93.8" font-size="7">=</text>
 </g>
</svg>
<div class="a" style="left:691px;top:140px;font-size:6.6px;line-height:8.75px;color:#3a3a3a;white-space:pre;transform:scaleX(0.9);transform-origin:0 0">/*The relations for this Robert's linkage are based on "Mechanisms and Mechanical Devices Sourcebook" pg. 138
/*Third edition by Nigel Sclater
STROKE=250
STYLUS_WIDTH=STROKE/2
LINKAGE_LENGTH=STYLUS_WIDTH*1.2
STYLUS_HEIGHT=sqrt(POW(LINKAGE_LENGTH,2)-POW(((STROKE-STYLUS_WIDTH)/2),2))

bplate_w:622=STROKE+40
bplate_h:622=STYLUS_HEIGHT+40
bplate_s=STROKE

link_l:626=LINKAGE_LENGTH

stylus_h:628=STYLUS_HEIGHT
stylus_w:628=STYLUS_WIDTH</div>
<!-- initial dropdown -->
<div class="a" style="left:934.5px;top:310.3px;width:58.5px;height:10.6px;background:linear-gradient(#fdfdfd,#f4f5f6);border:1px solid #d0d3d6"></div>
<div class="a" style="left:985.7px;top:310.3px;width:7.3px;height:10.6px;background:#eef0f2;border:1px solid #d6d9dc"></div>
<div class="t" style="left:938.5px;top:312.5px;font-size:6.2px;color:#333">Initial</div>
<div class="a" style="left:677px;top:323.5px;width:318.5px;height:1.5px;background:#d3d5d8"></div>
<div class="t" style="left:688.5px;top:329px;font-size:6.3px;color:#444">Local Parameters</div>
<div class="a" style="left:672px;top:344.5px;width:331px;height:1px;background:#e0e2e4"></div>
<div class="a" style="left:678.3px;top:352.2px;width:40.2px;height:11.3px;background:linear-gradient(#fdfdfd,#eceef0);border:1px solid #c6c9cd;border-radius:1.5px"></div>
<div class="a" style="left:909.2px;top:352.2px;width:41px;height:11.5px;background:linear-gradient(#c3e4fb,#8fcbf3);border:1px solid #8cc2e6;border-radius:1.5px"></div>
<div class="a" style="left:954.9px;top:352.2px;width:40.6px;height:11.3px;background:linear-gradient(#fdfdfd,#eceef0);border:1px solid #c6c9cd;border-radius:1.5px"></div>
<div class="t" style="left:689px;top:355px;font-size:6.5px;font-weight:bold;color:#333">Reset</div>
<div class="t" style="left:925px;top:355px;font-size:6.5px;font-weight:bold;color:#333">OK</div>
<div class="t" style="left:963.5px;top:355px;font-size:6.5px;font-weight:bold;color:#333">Cancel</div>
<svg class="a" style="left:670px;top:320px;overflow:visible" width="330" height="40">
 <path d="M317.8 -5.2h3l-1.5 1.7z" fill="#555"/>
 <path d="M11.5 8l3.5 3.3-3.5 3.3z" fill="#222"/>
</svg>
</body></html>
